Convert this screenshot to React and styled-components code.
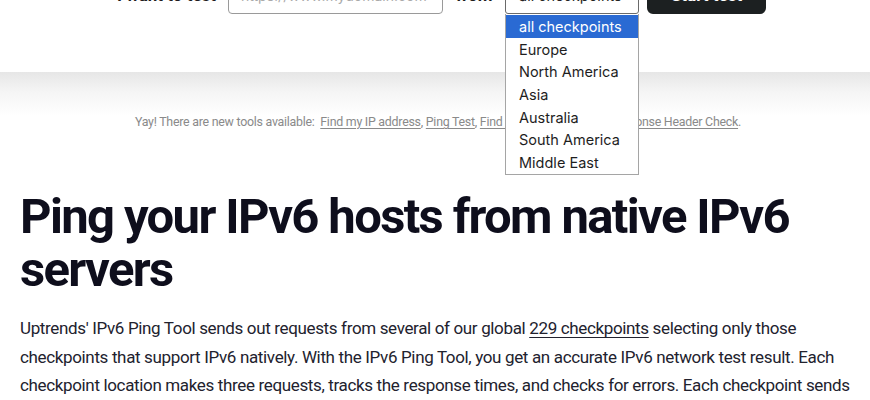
import React from "react";
import styled, { createGlobalStyle } from "styled-components";

const Global = createGlobalStyle`
  html, body { margin: 0; padding: 0; background: #fff; }
  body { font-family: Roboto, "Liberation Sans", sans-serif; color: #1b1b2b; overflow: hidden; }
  * { box-sizing: border-box; }
`;

const Header = styled.header`
  margin-top: -24px;
  padding: 0 0 58px 117px;
  background: #fff;
`;

const FormRow = styled.form`
  display: flex;
  align-items: center;
  height: 38px;
`;

const Label = styled.label`
  font: 700 17px Roboto, sans-serif;
  color: #1d1d1d;
  width: ${(p) => p.$w}px;
  margin-right: 13px;
  white-space: nowrap;
`;

const UrlInput = styled.input`
  width: 215px;
  height: 38px;
  border: 1px solid #9a9a9a;
  border-radius: 4px;
  padding: 0 12px;
  font: 14px Inter, sans-serif;
  color: #999;
  margin-right: 13px;
  &::placeholder { color: #aaa; }
`;

const SelectWrap = styled.div`
  position: relative;
  margin-right: 8px;
`;

const SelectBox = styled.div`
  width: 134px;
  height: 38px;
  border: 1px solid #6a6a6a;
  border-radius: 3px;
  padding: 0 13px;
  display: flex;
  align-items: center;
  font: 14.5px Inter, sans-serif;
  color: #222;
`;

const OptionList = styled.ul`
  position: absolute;
  top: 38px;
  left: 0;
  width: 134px;
  margin: 0;
  padding: 1px 0 0;
  list-style: none;
  background: #fff;
  border: 1px solid #a5a5a5;
  border-top: none;
  z-index: 5;
`;

const Option = styled.li`
  height: 22.7px;
  padding: 2px 0 0 13px;
  font: 14.5px/20.7px Inter, sans-serif;
  color: ${(p) => (p.$active ? "#fff" : "#1e1e1e")};
  background: ${(p) => (p.$active ? "#2a6ad3" : "transparent")};
`;

const StartButton = styled.button`
  width: 119px;
  height: 38px;
  border: none;
  border-radius: 6px;
  background: #1c2021;
  color: #fff;
  font: 700 17px Roboto, sans-serif;
`;

const Notice = styled.div`
  background: linear-gradient(#e6e6e6 0px, #f5f5f5 20px, #fff 44px);
  padding: 42px 0 0 6px;
  text-align: center;
  font: 12.4px Roboto, sans-serif;
  letter-spacing: -0.25px;
  color: #8a8a8a;
  height: 118px;
`;

const NoticeLink = styled.a`
  color: #8a8a8a;
  text-decoration: underline;
  text-underline-offset: 2px;
`;

const Main = styled.main`
  padding: 0 20px;
`;

const Title = styled.h1`
  margin: 0;
  font: 700 49px/53px Roboto, sans-serif;
  letter-spacing: -1.65px;
  color: #0e0e1c;
  width: 820px;
`;

const Body = styled.p`
  margin: 18px 0 0;
  font: 17px/28.5px Roboto, sans-serif;
  letter-spacing: -0.35px;
  color: #22222e;
  width: 845px;
`;

const BodyLink = styled.a`
  color: #22222e;
  text-decoration: underline;
  text-underline-offset: 3px;
`;

const regions = [
  "all checkpoints",
  "Europe",
  "North America",
  "Asia",
  "Australia",
  "South America",
  "Middle East",
];

export default function App() {
  return (
    <>
      <Global />
      <Header>
        <FormRow onSubmit={(e) => e.preventDefault()}>
          <Label $w={98}>I want to test</Label>
          <UrlInput placeholder="https://www.mydomain.com" />
          <Label $w={36}>from</Label>
          <SelectWrap>
            <SelectBox>all checkpoints</SelectBox>
            <OptionList>
              {regions.map((r, i) => (
                <Option key={r} $active={i === 0}>
                  {r}
                </Option>
              ))}
            </OptionList>
          </SelectWrap>
          <StartButton type="submit">Start test</StartButton>
        </FormRow>
      </Header>
      <Notice>
        Yay! There are new tools available:&nbsp;&nbsp;
        <NoticeLink href="#">Find my IP address</NoticeLink>,{" "}
        <NoticeLink href="#">Ping Test</NoticeLink>,{" "}
        <NoticeLink href="#">Find my Location</NoticeLink>,{" "}
        <NoticeLink href="#">HTTP Response Header Check</NoticeLink>.
      </Notice>
      <Main>
        <Title>Ping your IPv6 hosts from native IPv6 servers</Title>
        <Body>
          Uptrends' IPv6 Ping Tool sends out requests from several of our global{" "}
          <BodyLink href="#">229 checkpoints</BodyLink> selecting only those
          checkpoints that support IPv6 natively. With the IPv6 Ping Tool, you get
          an accurate IPv6 network test result. Each checkpoint location makes
          three requests, tracks the response times, and checks for errors. Each
          checkpoint sends its results back to you.
        </Body>
      </Main>
    </>
  );
}
